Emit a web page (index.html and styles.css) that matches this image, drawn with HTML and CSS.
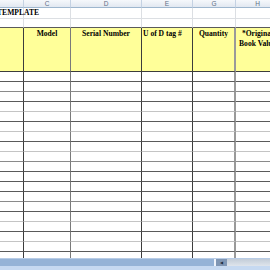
FILE: index.html
```html
<!DOCTYPE html>
<html>
<head>
<meta charset="utf-8">
<link rel="stylesheet" href="styles.css">
</head>
<body>
<div class="sheet">
  <div class="row colhead">
    <div class="ch"></div><div class="ch">C</div><div class="ch">D</div><div class="ch">E</div><div class="ch">G</div><div class="ch">H</div>
  </div>
  <div class="row r1">
    <div class="g title">TEMPLATE</div><div class="g"></div><div class="g"></div><div class="g"></div><div class="g"></div><div class="g"></div>
  </div>
  <div class="row r2">
    <div class="g"></div><div class="g"></div><div class="g"></div><div class="g"></div><div class="g"></div><div class="g"></div>
  </div>
  <div class="row hdr">
    <div class="c c0"></div>
    <div class="c c1">Model</div>
    <div class="c c2">Serial Number</div>
    <div class="c c3 nowrap">U of D tag #</div>
    <div class="c c4">Quantity</div>
    <div class="c c5">*Original Book Value</div>
  </div>
  <div class="row d dk"><div class="c c0"></div><div class="c c1"></div><div class="c c2"></div><div class="c c3"></div><div class="c c4"></div><div class="c c5"></div></div>
  <div class="row d md"><div class="c c0"></div><div class="c c1"></div><div class="c c2"></div><div class="c c3"></div><div class="c c4"></div><div class="c c5"></div></div>
  <div class="row d dk"><div class="c c0"></div><div class="c c1"></div><div class="c c2"></div><div class="c c3"></div><div class="c c4"></div><div class="c c5"></div></div>
  <div class="row d lt"><div class="c c0"></div><div class="c c1"></div><div class="c c2"></div><div class="c c3"></div><div class="c c4"></div><div class="c c5"></div></div>
  <div class="row d dk"><div class="c c0"></div><div class="c c1"></div><div class="c c2"></div><div class="c c3"></div><div class="c c4"></div><div class="c c5"></div></div>
  <div class="row d lt"><div class="c c0"></div><div class="c c1"></div><div class="c c2"></div><div class="c c3"></div><div class="c c4"></div><div class="c c5"></div></div>
  <div class="row d dk"><div class="c c0"></div><div class="c c1"></div><div class="c c2"></div><div class="c c3"></div><div class="c c4"></div><div class="c c5"></div></div>
  <div class="row d lt"><div class="c c0"></div><div class="c c1"></div><div class="c c2"></div><div class="c c3"></div><div class="c c4"></div><div class="c c5"></div></div>
  <div class="row d md"><div class="c c0"></div><div class="c c1"></div><div class="c c2"></div><div class="c c3"></div><div class="c c4"></div><div class="c c5"></div></div>
  <div class="row d dk"><div class="c c0"></div><div class="c c1"></div><div class="c c2"></div><div class="c c3"></div><div class="c c4"></div><div class="c c5"></div></div>
  <div class="row d dk"><div class="c c0"></div><div class="c c1"></div><div class="c c2"></div><div class="c c3"></div><div class="c c4"></div><div class="c c5"></div></div>
  <div class="row d dk"><div class="c c0"></div><div class="c c1"></div><div class="c c2"></div><div class="c c3"></div><div class="c c4"></div><div class="c c5"></div></div>
  <div class="row d md"><div class="c c0"></div><div class="c c1"></div><div class="c c2"></div><div class="c c3"></div><div class="c c4"></div><div class="c c5"></div></div>
  <div class="row d dk"><div class="c c0"></div><div class="c c1"></div><div class="c c2"></div><div class="c c3"></div><div class="c c4"></div><div class="c c5"></div></div>
  <div class="row d lt"><div class="c c0"></div><div class="c c1"></div><div class="c c2"></div><div class="c c3"></div><div class="c c4"></div><div class="c c5"></div></div>
  <div class="row d dk"><div class="c c0"></div><div class="c c1"></div><div class="c c2"></div><div class="c c3"></div><div class="c c4"></div><div class="c c5"></div></div>
  <div class="row d lt"><div class="c c0"></div><div class="c c1"></div><div class="c c2"></div><div class="c c3"></div><div class="c c4"></div><div class="c c5"></div></div>
  <div class="row d dk"><div class="c c0"></div><div class="c c1"></div><div class="c c2"></div><div class="c c3"></div><div class="c c4"></div><div class="c c5"></div></div>
  <div class="row d lt"><div class="c c0"></div><div class="c c1"></div><div class="c c2"></div><div class="c c3"></div><div class="c c4"></div><div class="c c5"></div></div>
</div>
<div class="tabbar">
  <div class="tabspace"></div>
  <div class="split"></div>
  <div class="sbtn">&#9664;</div>
  <div class="track"></div>
</div>
<div class="statusstrip"></div>
</body>
</html>
```

FILE: styles.css
```css
html, body {
  margin: 0;
  padding: 0;
  background: #ffffff;
}
body {
  width: 270px;
  height: 270px;
  overflow: hidden;
  display: flex;
  flex-direction: column;
  font-family: "Liberation Serif", "Times New Roman", serif;
}
.sheet {
  flex: 1;
  overflow: hidden;
  width: 270px;
}
.row {
  display: grid;
  grid-template-columns: 24px 47px 71px 51px 43px 44px;
  width: 280px;
}
.row > div {
  box-sizing: border-box;
}
.colhead {
  height: 8px;
}
.ch {
  background: linear-gradient(#f6f8fb, #e2e8f1);
  border-right: 1px solid #c5d2e3;
  border-bottom: 1px solid #9eb6ce;
  font-family: "Liberation Sans", Arial, sans-serif;
  font-size: 6.5px;
  line-height: 7px;
  color: #5f6f86;
  text-align: center;
}
.r1 { height: 11px; }
.r2 { height: 9px; }
.g {
  border-right: 1px solid #dcdfe3;
  border-bottom: 1px solid #dcdfe3;
}
.r2 .g {
  border-bottom: 1px solid #5a5a5a;
}
.title {
  font-weight: bold;
  font-size: 7.6px;
  line-height: 10px;
  white-space: nowrap;
  text-indent: -3px;
  overflow: visible;
}
.hdr {
  height: 44px;
  background: #ffff99;
}
.hdr .c {
  font-weight: bold;
  font-size: 7.6px;
  line-height: 9.6px;
  text-align: center;
  padding-top: 1px;
  border-bottom: 1px solid #3c3c3c;
}
.nowrap {
  white-space: nowrap;
  text-align: left !important;
  padding-left: 1px;
}
.c0 { border-right: 1px solid #3c3c3c; }
.c1 { border-right: 1px solid #7a7a7a; }
.c2 { border-right: 1px solid #3c3c3c; }
.c3 { border-right: 1px solid #3c3c3c; }
.c4 { border-right: 2px solid #9a9a9a; }
.c5 { border-right: 1px solid #9a9a9a; }
.d { height: 10px; }
.d.dk .c { border-bottom: 1px solid #5a5a5a; }
.d.md .c { border-bottom: 1px solid #8a8a8a; }
.d.lt .c { border-bottom: 1px solid #c4c4c4; }
.tabbar {
  height: 8px;
  flex: none;
  display: flex;
  background: #95b3d7;
  border-top: 1px solid #b8cce6;
  box-sizing: border-box;
}
.tabspace { flex: 1; }
.split {
  width: 2px;
  background: #eef3fa;
}
.sbtn {
  width: 11px;
  background: #7f96b4;
  color: #1f2d40;
  font-family: "DejaVu Sans", sans-serif;
  font-size: 4px;
  line-height: 7px;
  text-align: center;
}
.track {
  width: 43px;
  background: linear-gradient(#c2ccd8, #dfe5ec);
}
.statusstrip {
  height: 4px;
  flex: none;
  background: #c6d9f1;
}
```
